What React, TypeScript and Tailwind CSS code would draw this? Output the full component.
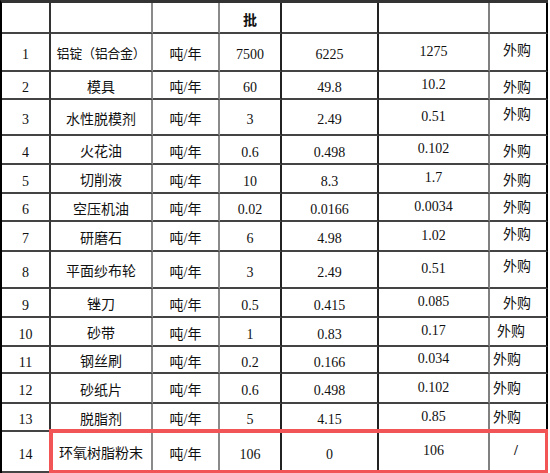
import React from "react";

type Row = {
  no: string;
  name: string;
  nCls?: string;
  a: string;
  b: string;
  c: string;
  d: string;
  dCls: string;
};

const rows: Row[] = [
  { no: "1", name: "铝锭（铝合金）", nCls: "text-[13px] tracking-[-0.3px] pb-[1px]", a: "7500", b: "6225", c: "1275", d: "外购", dCls: "pl-[13px] pb-[2px]" },
  { no: "2", name: "模具", a: "60", b: "49.8", c: "10.2", d: "外购", dCls: "pl-[13px] pt-[5px]" },
  { no: "3", name: "水性脱模剂", a: "3", b: "2.49", c: "0.51", d: "外购", dCls: "pl-[13px] pb-[5px]" },
  { no: "4", name: "火花油", a: "0.6", b: "0.498", c: "0.102", d: "外购", dCls: "pl-[13px] pt-[4px]" },
  { no: "5", name: "切削液", a: "10", b: "8.3", c: "1.7", d: "外购", dCls: "pl-[13px] pt-[4px]" },
  { no: "6", name: "空压机油", a: "0.02", b: "0.0166", c: "0.0034", d: "外购", dCls: "pl-[13px] pt-[2px]" },
  { no: "7", name: "研磨石", a: "6", b: "4.98", c: "1.02", d: "外购", dCls: "pl-[13px] pb-[2px]" },
  { no: "8", name: "平面纱布轮", a: "3", b: "2.49", c: "0.51", d: "外购", dCls: "pl-[13px] pb-[6px]" },
  { no: "9", name: "锉刀", a: "0.5", b: "0.415", c: "0.085", d: "外购", dCls: "pl-[13px] pt-[3px]" },
  { no: "10", name: "砂带", a: "1", b: "0.83", c: "0.17", d: "外购", dCls: "pl-[7px] pt-[1px]" },
  { no: "11", name: "钢丝刷", a: "0.2", b: "0.166", c: "0.034", d: "外购", dCls: "pl-[3px] pt-[1px]" },
  { no: "12", name: "砂纸片", a: "0.6", b: "0.498", c: "0.102", d: "外购", dCls: "pl-[3px] pt-[1px]" },
  { no: "13", name: "脱脂剂", a: "5", b: "4.15", c: "0.85", d: "外购", dCls: "pl-[3px] pt-[2px]" },
  { no: "14", name: "环氧树脂粉末", a: "106", b: "0", c: "106", d: "/", dCls: "pl-[24px] pb-[1px] font-bold" },
];

const base = "flex items-center border-b-2 border-b-[#444] border-r-2";
const c1 = `${base} justify-center border-r-[#333] pt-[6px]`;
const c2 = `${base} justify-center border-r-[#8a8a8a] pt-[1px]`;
const c3 = `${base} justify-center border-r-[#8a8a8a] pt-[6px]`;
const c4 = `${base} justify-center border-r-[#222] pt-[6px]`;
const c5 = `${base} justify-center border-r-[#222] pt-[6px]`;
const c6 = `${base} justify-center border-r-[#808080] pb-[1px]`;
const c7 = `${base} justify-start border-r-black`;

export default function App() {
  return (
    <div className="w-[550px] h-[473px] bg-white overflow-hidden relative text-[14px] leading-none text-[#111] [font-family:'Liberation_Serif','Noto_Sans_CJK_SC',serif]">
      <div className="w-[548px] border-t-[3px] border-t-[#333] border-l-2 border-l-black grid grid-cols-[49px_102px_67px_62px_97px_111px_58px] grid-rows-[31px_38px_28px_36px_29px_29px_28px_30px_37px_29px_29px_27px_30px_28px_41px]">
        <div className={c1}></div>
        <div className={c2}></div>
        <div className={c3}></div>
        <div className={`${base} justify-center border-r-[#222] pt-[2px] font-bold [font-family:'Noto_Sans_CJK_SC',sans-serif]`}>批</div>
        <div className={c5}></div>
        <div className={c6}></div>
        <div className={c7}></div>
        {rows.map((r) => (
          <React.Fragment key={r.no}>
            <div className={c1}>{r.no}</div>
            <div className={`${c2} [font-family:'Noto_Sans_CJK_SC',sans-serif] ${r.nCls ?? ""}`}>{r.name}</div>
            <div className={c3}>吨/年</div>
            <div className={c4}>{r.a}</div>
            <div className={c5}>{r.b}</div>
            <div className={c6}>{r.c}</div>
            <div className={`${c7} ${r.dCls}`}>{r.d}</div>
          </React.Fragment>
        ))}
      </div>
      <div className="absolute left-[49px] top-[429px] w-[499px] h-[44px] border-t-4 border-l-4 border-r-[3px] border-b-[3px] border-[#f25555] pointer-events-none"></div>
    </div>
  );
}
